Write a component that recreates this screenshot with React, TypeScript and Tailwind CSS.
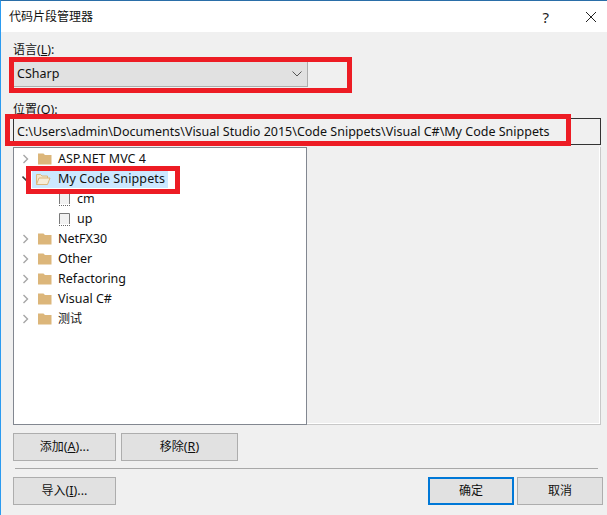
import React from "react";

function Folder({ open }: { open?: boolean }) {
  if (open) {
    return (
      <svg width="16" height="13" viewBox="0 0 16 13" className="shrink-0">
        <path d="M1.5 11.5V1.5h4l1.5 1.5h5.5v2" fill="#f3e4c8" stroke="#dcb67a" />
        <path d="M1.5 11.5l2.5-6.5h11l-2.5 6.5z" fill="#f6ecd8" stroke="#dcb67a" />
      </svg>
    );
  }
  return (
    <svg width="14" height="12" viewBox="0 0 14 12" className="shrink-0">
      <path d="M0 11.5V0.5h5.5L7 2h6.5v9.5z" fill="#dcb67a" />
    </svg>
  );
}

function Chevron({ open }: { open?: boolean }) {
  return (
    <svg width="8" height="10" viewBox="0 0 8 10" className="shrink-0">
      {open ? (
        <path d="M0.5 2.5L5.5 7.5V2.5" fill="none" stroke="#404040" strokeWidth="1.6" />
      ) : (
        <path d="M1.5 1L5.5 5L1.5 9" fill="none" stroke="#a6a6a6" strokeWidth="1.4" />
      )}
    </svg>
  );
}

function FileIcon() {
  return (
    <svg width="12" height="13" viewBox="0 0 12 13" className="shrink-0">
      <path d="M0.5 11V0.5H10.5V11" fill="#f2f2f2" stroke="#7a7a7a" />
      <path d="M0 12.5H11" stroke="#6a6a6a" strokeDasharray="1 1" />
    </svg>
  );
}

function FolderRow({ name, cjk }: { name: string; cjk?: boolean }) {
  return (
    <div className="flex h-5 items-center pl-[8px]">
      <Chevron />
      <div className="ml-[8px] flex"><Folder /></div>
      <span className={cjk ? "ml-[6px] text-[12px]" : "ml-[6px]"}>{name}</span>
    </div>
  );
}

function FileRow({ name }: { name: string }) {
  return (
    <div className="flex h-5 items-center pl-[45px]">
      <FileIcon />
      <span className="ml-[6px]">{name}</span>
    </div>
  );
}

function Btn({ children, className = "" }: { children: React.ReactNode; className?: string }) {
  return (
    <div className={`flex h-[28px] items-center justify-center bg-[#e1e1e1] ${className}`}>
      {children}
    </div>
  );
}

export default function App() {
  return (
    <div
      className="relative h-[515px] w-[607px] overflow-hidden border-t border-l border-t-[#2a6ea8] border-l-[#2b9bf0] bg-[#f0f0f0] text-[12.5px] leading-4 text-[#111]"
      style={{ fontFamily: '"Noto Sans", "Noto Sans CJK SC", sans-serif' }}
    >
      {/* Title bar */}
      <div className="flex h-[31px] items-center bg-white pl-[8px] pr-[11px]">
        <span className="text-[12px]">代码片段管理器</span>
        <span className="ml-auto mr-[37px] text-[15px] text-[#222]">?</span>
        <svg width="10" height="10" viewBox="0 0 10 10">
          <path d="M0 0L10 10M10 0L0 10" stroke="#222" strokeWidth="1" />
        </svg>
      </div>

      <div className="pl-[12px] pr-[5px]">
        {/* Language */}
        <div className="mt-[10px] h-[16px]">
          <span className="text-[12px]">语言</span>(<span className="underline">L</span>):
        </div>
        <div className="mt-[3px] flex h-[26px] w-[295px] items-center justify-between border border-[#adadad] bg-[#e1e1e1] pl-[3px] pr-[5px]">
          <span>CSharp</span>
          <svg width="10" height="6" viewBox="0 0 10 6">
            <path d="M0.5 0.5L5 5L9.5 0.5" fill="none" stroke="#555" />
          </svg>
        </div>

        {/* Location */}
        <div className="mt-[15px] h-[16px]">
          <span className="text-[12px]">位置</span>(<span className="underline">O</span>):
        </div>
        <div className="flex h-[27px] w-[588px] items-center border border-[#333] bg-[#f0f0f0] pl-[3px]">
          <span className="whitespace-nowrap">C:\Users\admin\Documents\Visual Studio 2015\Code Snippets\Visual C#\My Code Snippets</span>
        </div>

        {/* Tree + preview */}
        <div className="mt-[2px] flex h-[278px] w-[588px]">
          <div className="w-[294px] border border-[#828790] bg-white pt-[1px]">
            <FolderRow name="ASP.NET MVC 4" />
            <div className="flex h-5 items-center pl-[8px]">
              <Chevron open />
              <div className="ml-[2px] flex h-[18px] w-[136px] items-center bg-[#cce8ff] pl-[3px]">
                <Folder open />
                <span className="ml-[7px] tracking-[0.12px]">My Code Snippets</span>
              </div>
            </div>
            <FileRow name="cm" />
            <FileRow name="up" />
            <FolderRow name="NetFX30" />
            <FolderRow name="Other" />
            <FolderRow name="Refactoring" />
            <FolderRow name="Visual C#" />
            <FolderRow name="测试" cjk />
          </div>
          <div className="flex-1 border-r border-b border-[#c8c8c8] shadow-[inset_-1px_-1px_0_#ffffff]" />
        </div>

        {/* Add / remove */}
        <div className="mt-[8px] flex gap-[5px]">
          <Btn className="w-[103px] border border-[#adadad]"><span className="text-[12px]">添加</span>(<span className="underline">A</span>)...</Btn>
          <Btn className="w-[117px] border border-[#adadad]"><span className="text-[12px]">移除</span>(<span className="underline">R</span>)</Btn>
        </div>

        <div className="ml-[2px] mt-[7px] h-px w-[583px] bg-[#a8a8a8]" />

        {/* Footer */}
        <div className="mt-[8px] flex">
          <Btn className="w-[103px] border border-[#adadad]"><span className="text-[12px]">导入</span>(<span className="underline">I</span>)...</Btn>
          <Btn className="ml-auto mr-[3px] w-[86px] border-2 border-[#0078d7] text-[12px]">确定</Btn>
          <Btn className="mr-[-1px] w-[86px] border border-[#adadad] text-[12px]">取消</Btn>
        </div>
      </div>

      {/* Red annotation frames */}
      <div className="absolute left-[8px] top-[56px] h-[36px] w-[343px] border-[5px] border-[#ed1c24]" />
      <div className="absolute left-[4px] top-[113px] h-[32px] w-[566px] border-[5px] border-[#ed1c24]" />
      <div className="absolute left-[25px] top-[165px] h-[28px] w-[154px] border-[5px] border-[#ed1c24]" />
    </div>
  );
}
